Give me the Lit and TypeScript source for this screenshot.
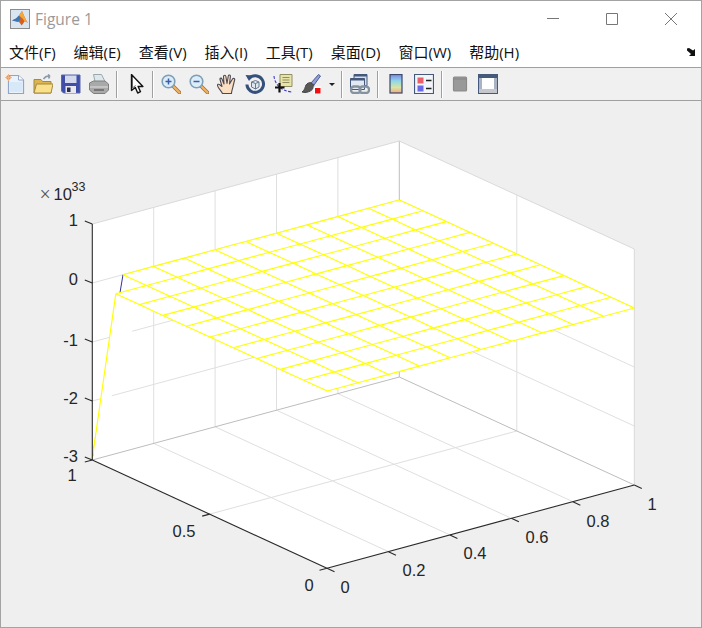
import { LitElement, html, svg, css } from 'lit';
import { customElement } from 'lit/decorators.js';

type Pt = [number, number];

const MENUS = ['文件(F)', '编辑(E)', '查看(V)', '插入(I)', '工具(T)', '桌面(D)', '窗口(W)', '帮助(H)'];

// axes box corners at the bottom plane, page pixels minus plot offset (plot starts at y=101)
const TOP = 101;
const A: Pt = [92.3, 460 - TOP];
const B: Pt = [327, 568.3 - TOP];
const C: Pt = [634.3, 485 - TOP];
const D: Pt = [399.3, 377 - TOP];
const Z_STEP = 59;
const HEIGHT = Z_STEP * 4;

const mix = (p: Pt, q: Pt, t: number): Pt => [p[0] + (q[0] - p[0]) * t, p[1] + (q[1] - p[1]) * t];
const up = (p: Pt, dz: number): Pt => [p[0], p[1] - dz];

const seg = (p: Pt, q: Pt, cls: string) =>
  svg`<line class=${cls} x1=${p[0]} y1=${p[1]} x2=${q[0]} y2=${q[1]}></line>`;

// z=0 mesh, i runs back->right, j runs back->left
const N = 10;
const meshPt = (i: number, j: number): Pt => {
  const u = i / N;
  const v = j / N;
  const x = D[0] + (C[0] - D[0]) * u + (A[0] - D[0]) * v;
  const y = D[1] - Z_STEP * 3 + (C[1] - D[1]) * u + (A[1] - D[1]) * v;
  return [x, y];
};
const SPIKE: Pt = [92.3, 458 - TOP];
const surfPt = (i: number, j: number): Pt => (i === 0 && j === N ? SPIKE : meshPt(i, j));

const poly = (pts: Pt[], cls: string) =>
  svg`<polygon class=${cls} points=${pts.map((p) => p.join(',')).join(' ')}></polygon>`;

function renderPlot() {
  const xTicks = [0, 0.2, 0.4, 0.6, 0.8, 1];
  const zLevels = [0, 1, 2, 3, 4];
  const walls = [
    poly([A, D, up(D, HEIGHT), up(A, HEIGHT)], 'wall'),
    poly([D, C, up(C, HEIGHT), up(D, HEIGHT)], 'wall'),
    poly([A, B, C, D], 'wall'),
  ];
  const grid = [
    ...xTicks.slice(1, 5).map((f) => {
      const front = mix(B, C, f);
      const back = mix(A, D, f);
      return svg`${seg(front, back, 'grid')}${seg(back, up(back, HEIGHT), 'grid')}`;
    }),
    (() => {
      const front = mix(B, A, 0.5);
      const back = mix(C, D, 0.5);
      return svg`${seg(front, back, 'grid')}${seg(back, up(back, HEIGHT), 'grid')}`;
    })(),
    ...zLevels.slice(1, 4).map(
      (k) => svg`${seg(up(A, k * Z_STEP), up(D, k * Z_STEP), 'grid')}${seg(up(D, k * Z_STEP), up(C, k * Z_STEP), 'grid')}`
    ),
  ];
  const outline = [meshPt(0, 0), meshPt(N, 0), meshPt(N, N), meshPt(1, N), meshPt(1, N - 1), meshPt(0, N - 1)];
  const meshLines = [];
  for (let i = 0; i <= N; i++) {
    for (let j = 0; j <= N; j++) {
      const isSpikeEdge = i === 0 && j === N - 1;
      if (i < N) meshLines.push(seg(surfPt(i, j), surfPt(i + 1, j), 'mesh'));
      if (j < N && !isSpikeEdge) meshLines.push(seg(surfPt(i, j), surfPt(i, j + 1), 'mesh'));
    }
  }
  const zLabels: [string, number, number][] = [
    ['1', 78, 226],
    ['0', 78, 285],
    ['-1', 78, 346],
    ['-2', 78, 404],
    ['-3', 78, 462],
  ];
  const xLabels: [string, number, number][] = [
    ['0', 345, 593],
    ['0.2', 414, 576],
    ['0.4', 475, 559],
    ['0.6', 537, 543],
    ['0.8', 598, 527],
    ['1', 652, 510],
  ];
  const yLabels: [string, number, number][] = [
    ['1', 72, 481],
    ['0.5', 184, 537],
    ['0', 309, 591],
  ];
  return svg`
    ${walls}
    ${grid}
    ${seg(A, D, 'edge-back')}${seg(D, C, 'edge-back')}
    ${seg(D, up(D, HEIGHT), 'edge-back')}
    ${seg(up(A, HEIGHT), up(D, HEIGHT), 'edge-top')}${seg(up(D, HEIGHT), up(C, HEIGHT), 'edge-top')}
    ${seg(up(C, HEIGHT), C, 'edge-top')}
    ${poly(outline, 'face')}
    ${seg(meshPt(0, N - 1), SPIKE, 'spike')}
    ${poly([meshPt(1, N - 1), meshPt(1, N), SPIKE], 'face')}
    ${meshLines}
    ${seg(A, up(A, HEIGHT), 'axis')}${seg(A, B, 'axis')}${seg(B, C, 'axis')}
    ${zLevels.map((k) => {
      const p = up(A, k * Z_STEP);
      return seg(p, [p[0] - 7.5, p[1] - 3], 'axis');
    })}
    ${xTicks.map((f) => {
      const p = mix(B, C, f);
      return seg(p, [p[0] + 7.5, p[1] + 3.5], 'axis');
    })}
    ${[0, 0.5, 1].map((f) => {
      const p = mix(B, A, f);
      return seg(p, [p[0] - 7.5, p[1] + 2], 'axis');
    })}
    ${zLabels.map(([t, x, y]) => svg`<text class="tick end" x=${x} y=${y - TOP}>${t}</text>`)}
    ${[...xLabels, ...yLabels].map(([t, x, y]) => svg`<text class="tick mid" x=${x} y=${y - TOP}>${t}</text>`)}
    <text class="times" x="39.5" y=${201 - TOP}>×</text>
    <text class="tick" x="53.5" y=${199.5 - TOP}>10</text>
    <text class="sup" x="71.5" y=${190.5 - TOP}>33</text>
  `;
}

const ICONS = {
  newDoc: svg`
    <path d="M3.500 1.500h10l5 4.500v13.500h-15z" fill="#eaf3fc" stroke="#8fa6c8" stroke-width="1.200"/>
    <path d="M13.500 1.500V6h5" fill="#fff" stroke="#8fa6c8"/>
    <path d="M5 8h12v10H5z" fill="#cfe2f7" opacity=".7"/>
    <circle cx="3.500" cy="3.500" r="2.300" fill="#ef8f4a"/>
    <path d="M3.500 0v7M0 3.500h7" stroke="#f6b27e" stroke-width=".9"/>`,
  open: svg`
    <path d="M1 5.500V19h17V7.500H9.500L8 5.500z" fill="#dcb450" stroke="#a28a3f"/>
    <path d="M1 19 3.500 10H20l-2 9z" fill="#fbe08c" stroke="#a28a3f"/>
    <path d="M10.500 5c1.500-2.500 3.500-3.500 6.500-3M17 2l-2-1.500M17 2l-1.500 2.500" fill="none" stroke="#8d99a6" stroke-width="1.500"/>`,
  save: svg`
    <path d="M.5 1h18.500v18H2.500L.5 17z" fill="#3f4ea8" stroke="#5b66a8"/>
    <path d="M4 1.500h11.500v7.500H4z" fill="#d5d9ee"/>
    <path d="M4.500 12h10.500v7H4.500z" fill="#e8e8ee"/>
    <path d="M6 13.500h3.500v4.500H6z" fill="#2b2f55"/>`,
  print: svg`
    <path d="M4.500 .5h8l3.500 7H6z" fill="#dde7ee" stroke="#9aa"/>
    <path d="M.5 9 4.500 7h11.500l3.500 3v6l-3.500 3.500H4.500L.5 16z" fill="#a9a9a9" stroke="#7e7e7e"/>
    <path d="M1 13h18" stroke="#e0e0e0"/>
    <path d="M5 16h10" stroke="#666" stroke-width="1.500"/>`,
  pointer: svg`
    <path d="M4.500 .5v16l3.800-3 2.400 5.500 2.800-1.300-2.400-5.200h4.800z" fill="#fff" stroke="#111" stroke-width="1.400" stroke-linejoin="round"/>
    <path d="M5.500 3v11l3-2.500" fill="none" stroke="#666"/>`,
  zoomIn: svg`
    <path d="M12 12l6.500 6.500" stroke="#a9733a" stroke-width="3.800" stroke-linecap="round"/>
    <path d="M12.500 12.500l6 6" stroke="#f0b263" stroke-width="2" stroke-linecap="round"/>
    <circle cx="7.500" cy="7.500" r="6.300" fill="#dcecf8" stroke="#7d9fb8" stroke-width="1.600"/>
    <path d="M4.500 7.500h6M7.500 4.500v6" stroke="#3b5ea8" stroke-width="1.500"/>`,
  zoomOut: svg`
    <path d="M12 12l6.500 6.500" stroke="#a9733a" stroke-width="3.800" stroke-linecap="round"/>
    <path d="M12.500 12.500l6 6" stroke="#f0b263" stroke-width="2" stroke-linecap="round"/>
    <circle cx="7.500" cy="7.500" r="6.300" fill="#dcecf8" stroke="#7d9fb8" stroke-width="1.600"/>
    <path d="M4.500 7.500h6" stroke="#3b5ea8" stroke-width="1.500"/>`,
  hand: svg`
    <path d="M5.500 19.500C4 16.500 1 14 .5 11.500c-.2-1.300 1.200-1.700 2.200-.8L5 12.500 3 5.500C2.700 4 4.500 3.500 5 5L7 10 6.500 2.500c0-1.600 2.200-1.600 2.400 0L10 9.500 11.300 2c.3-1.500 2.300-1.200 2.100.4L12.500 10l3-5c.8-1.300 2.600-.5 2.100 1L16 12.500c-.5 2.500-1.500 5-1.500 7z" fill="#fbdfc3" stroke="#4e4a52" stroke-width="1.100" stroke-linejoin="round"/>`,
  rotate: svg`
    <path d="M4 4.500A8.300 8.300 0 1 1 1.900 10.500" fill="none" stroke="#35507c" stroke-width="3"/>
    <path d="M.5 1l7.500.5-4 5.500z" fill="#35507c"/>
    <path d="M6.500 8l4-1.500 3.500 1.500v5l-3.500 2-4-2z" fill="#dfe7ee" stroke="#66788f"/>
    <path d="M6.500 8l4 1.500 3.500-1.500M10.500 9.500V15" fill="none" stroke="#66788f"/>`,
  cursor: svg`
    <path d="M1 2c.5 7 6 15 18 16" fill="none" stroke="#3a3acc" stroke-width="1.100" stroke-dasharray="3 1.500"/>
    <path d="M7 .5h12v12H7z" fill="#e8e3a8" stroke="#8f8f62"/>
    <path d="M9.500 3.500h7M9.500 6h7M9.500 8.500h7" stroke="#8f8f62"/>
    <path d="M6.500 9v9.500M2 13.500h9.500" stroke="#111" stroke-width="2.200"/>`,
  brush: svg`
    <path d="M10 9l7.500-8.500 2 1.500-6.500 9z" fill="#8ea0d4" stroke="#4c5a92"/>
    <path d="M9.500 8.500l3.500 3c-.5 4-3.500 6.500-9 7l-3-.5c2.800-1.500 3-5 4-7 1-1.500 3-2.500 4.500-2.500z" fill="#585858" stroke="#444"/>
    <path d="M12.500 12.500h7.500v7.500h-7.500z" fill="#fff"/>
    <path d="M14 14h5.500v5.500H14z" fill="#ee0f0f"/>`,
  link: svg`
    <path d="M4 .5h13v11H4z" fill="#d5dde9" stroke="#44597c"/>
    <path d="M4 .5h13v2H4z" fill="#44597c"/>
    <path d="M.5 4.500h14v11H.5z" fill="#e3e9f1" stroke="#44597c"/>
    <path d="M.5 4.500h14v2H.5z" fill="#44597c"/>
    <rect x="1" y="12.500" width="9.500" height="6.500" rx="3" fill="none" stroke="#85929f" stroke-width="2.300"/>
    <rect x="9.500" y="12.500" width="9.500" height="6.500" rx="3" fill="none" stroke="#85929f" stroke-width="2.300"/>`,
  colorbar: svg`
    <defs><linearGradient id="cb" x1="0" y1="0" x2="0" y2="1">
      <stop offset="0" stop-color="#7f86e8"/><stop offset=".35" stop-color="#8fd6e8"/>
      <stop offset=".7" stop-color="#d8e6a0"/><stop offset="1" stop-color="#f5a58a"/>
    </linearGradient></defs>
    <rect x="4" y=".5" width="12" height="18.500" fill="url(#cb)" stroke="#39486b" stroke-width="1.200"/>`,
  legend: svg`
    <path d="M.5.5h19v19H.5z" fill="#f2f5f9" stroke="#44597c" stroke-width="1.200"/>
    <path d="M3.500 3.500h6v6h-6z" fill="#e8606a"/>
    <path d="M3.500 11.500h6v6h-6z" fill="#6a6ae8"/>
    <path d="M12 6.500h5.500M12 14.500h5.500" stroke="#222" stroke-width="1.500"/>`,
  hide: svg`
    <rect x="3.500" y="3" width="13" height="14" rx="1" fill="#999" stroke="#8a8a8a" stroke-width="1.200"/>
    <path d="M3.500 5h13" stroke="#858585"/>`,
  tools: svg`
    <path d="M.5.5h19v19H.5z" fill="#fff" stroke="#44597c" stroke-width="1.300"/>
    <path d="M1 1h18v3H1z" fill="#44597c"/>
    <path d="M1 4h3v15H1zM16 4h3v15h-3z" fill="#a9b3c4"/>
    <path d="M1 15h18v4H1z" fill="#c4c8ce"/>`,
};

@customElement('app-root')
export class AppRoot extends LitElement {
  static styles = css`
    :host {
      display: block;
      width: 702px;
      height: 628px;
    }

    .window {
      box-sizing: border-box;
      width: 702px;
      height: 628px;
      display: flex;
      flex-direction: column;
      border: 1px solid #a3a3a3;
      background: #f0f0f0;
      overflow: hidden;
    }

    .title {
      height: 35px;
      flex: none;
      display: flex;
      align-items: center;
      background: #fff;
      padding: 0 0 0 9px;
    }

    .title .app-icon {
      width: 20px;
      height: 20px;
      margin-right: 5px;
      flex: none;
    }

    .title .name {
      font: 15.5px 'Open Sans', sans-serif;
      color: #9a9a9a;
      flex: 1;
    }

    .win-btn {
      width: 12px;
      height: 12px;
      flex: none;
      display: block;
      margin-right: 47px;
    }

    .win-btn:last-child {
      margin-right: 24px;
    }

    .menu {
      height: 31px;
      flex: none;
      display: flex;
      align-items: center;
      gap: 18px;
      padding: 0 4px 0 8px;
      background: #fff;
      border-bottom: 1px solid #a0a0a0;
      font: 15px 'Open Sans', 'Noto Sans CJK SC', sans-serif;
      color: #111;
    }

    .menu .item {
      white-space: nowrap;
    }

    .menu .dock {
      margin-left: auto;
      width: 10px;
      height: 8px;
    }

    .toolbar {
      height: 32px;
      flex: none;
      display: flex;
      align-items: center;
      padding-left: 0;
      border-bottom: 1px solid #a0a0a0;
      background: #f0f0f0;
    }

    .tool {
      width: 28px;
      height: 32px;
      flex: none;
      display: flex;
      align-items: center;
      justify-content: center;
    }

    .tool svg {
      width: 20px;
      height: 20px;
      filter: blur(0.35px);
    }

    .tool.pointer {
      width: 24px;
      margin-left: 4px;
    }

    .drop {
      width: 0;
      height: 0;
      margin-left: 4px;
      border: solid transparent;
      border-width: 3px 3.5px 0;
      border-top-color: #222;
      flex: none;
    }

    .sep {
      width: 1px;
      height: 27px;
      margin: 0 3px;
      flex: none;
      background: #a0a0a0;
      border-right: 1px solid #fff;
    }

    .sep.after-drop {
      margin-left: 6px;
    }

    .plot {
      flex: 1;
      min-height: 0;
      background: #efefef;
    }

    .plot svg {
      display: block;
    }

    .wall {
      fill: #fff;
    }

    .face {
      fill: #fff;
    }

    line {
      fill: none;
    }

    .grid {
      stroke: #dfdfdf;
      stroke-width: 1;
    }

    .edge-back {
      stroke: #bdbdbd;
    }

    .edge-top {
      stroke: #d9d9d9;
    }

    .axis {
      stroke: #2a2a2a;
      stroke-width: 1.1;
    }

    .spike {
      stroke: #33339a;
    }

    .mesh {
      stroke: #ffff00;
      stroke-width: 1.15;
    }

    text {
      font-family: 'Liberation Sans', Arial, sans-serif;
      fill: #262626;
    }

    .tick {
      font-size: 16.5px;
    }

    .tick.end {
      text-anchor: end;
    }

    .tick.mid {
      text-anchor: middle;
    }

    .sup {
      font-size: 12.5px;
    }

    .times {
      font-family: 'Liberation Serif', serif;
      font-size: 20px;
      fill: #555;
    }
  `;

  private tool(icon: unknown, extra = '') {
    return html`<div class="tool ${extra}"><svg viewBox="0 0 20 20">${icon}</svg></div>`;
  }

  render() {
    return html`
      <div class="window">
        <div class="title">
          <svg class="app-icon" viewBox="0 0 20 20">
            <rect x=".5" y=".5" width="19" height="19" fill="#d9e6f2" stroke="#8c8c8c"/>
            <path d="M2 11.500l4-2 3-3 3-4.500c1 2 3 8 6 12-2-1-3-2-3.500-1.500-1 1.500-2 3-3 4-1-2-2.500-4-4-4z" fill="#d95f1f"/>
            <path d="M2 11.500l4-2 3-3c.7 1 1 2 1.500 3-1 2-2 3-2.500 3.500z" fill="#3a79b8"/>
            <path d="M9 6.500L12 2c1 2 3 8 6 12-2-1-3-2-3.500-1.500-1-2.500-3-4-5.500-6z" fill="#f2a93b"/>
          </svg>
          <span class="name">Figure 1</span>
          <svg class="win-btn" viewBox="0 0 12 12"><path d="M0 5.500h12" stroke="#777"/></svg>
          <svg class="win-btn" viewBox="0 0 12 12"><path d="M.5.5h11v11H.5z" fill="none" stroke="#777"/></svg>
          <svg class="win-btn" viewBox="0 0 12 12"><path d="M0 0l12 12M12 0L0 12" stroke="#777"/></svg>
        </div>
        <div class="menu">
          ${MENUS.map((m) => html`<span class="item">${m}</span>`)}
          <svg class="dock" viewBox="0 0 10 8"><path d="M0 .5l2-.5 4 2.500L8 1v7H2l2-2L0 2.500z" fill="#111"/></svg>
        </div>
        <div class="toolbar">
          ${this.tool(ICONS.newDoc)}${this.tool(ICONS.open)}${this.tool(ICONS.save)}${this.tool(ICONS.print)}
          <div class="sep"></div>
          ${this.tool(ICONS.pointer, 'pointer')}
          <div class="sep"></div>
          ${this.tool(ICONS.zoomIn)}${this.tool(ICONS.zoomOut)}${this.tool(ICONS.hand)}${this.tool(ICONS.rotate)}${this.tool(ICONS.cursor)}${this.tool(ICONS.brush)}
          <div class="drop"></div>
          <div class="sep after-drop"></div>
          ${this.tool(ICONS.link)}
          <div class="sep"></div>
          ${this.tool(ICONS.colorbar)}${this.tool(ICONS.legend)}
          <div class="sep"></div>
          ${this.tool(ICONS.hide)}${this.tool(ICONS.tools)}
        </div>
        <div class="plot">
          <svg width="700" height="526" viewBox="1 0 700 526">${renderPlot()}</svg>
        </div>
      </div>
    `;
  }
}
